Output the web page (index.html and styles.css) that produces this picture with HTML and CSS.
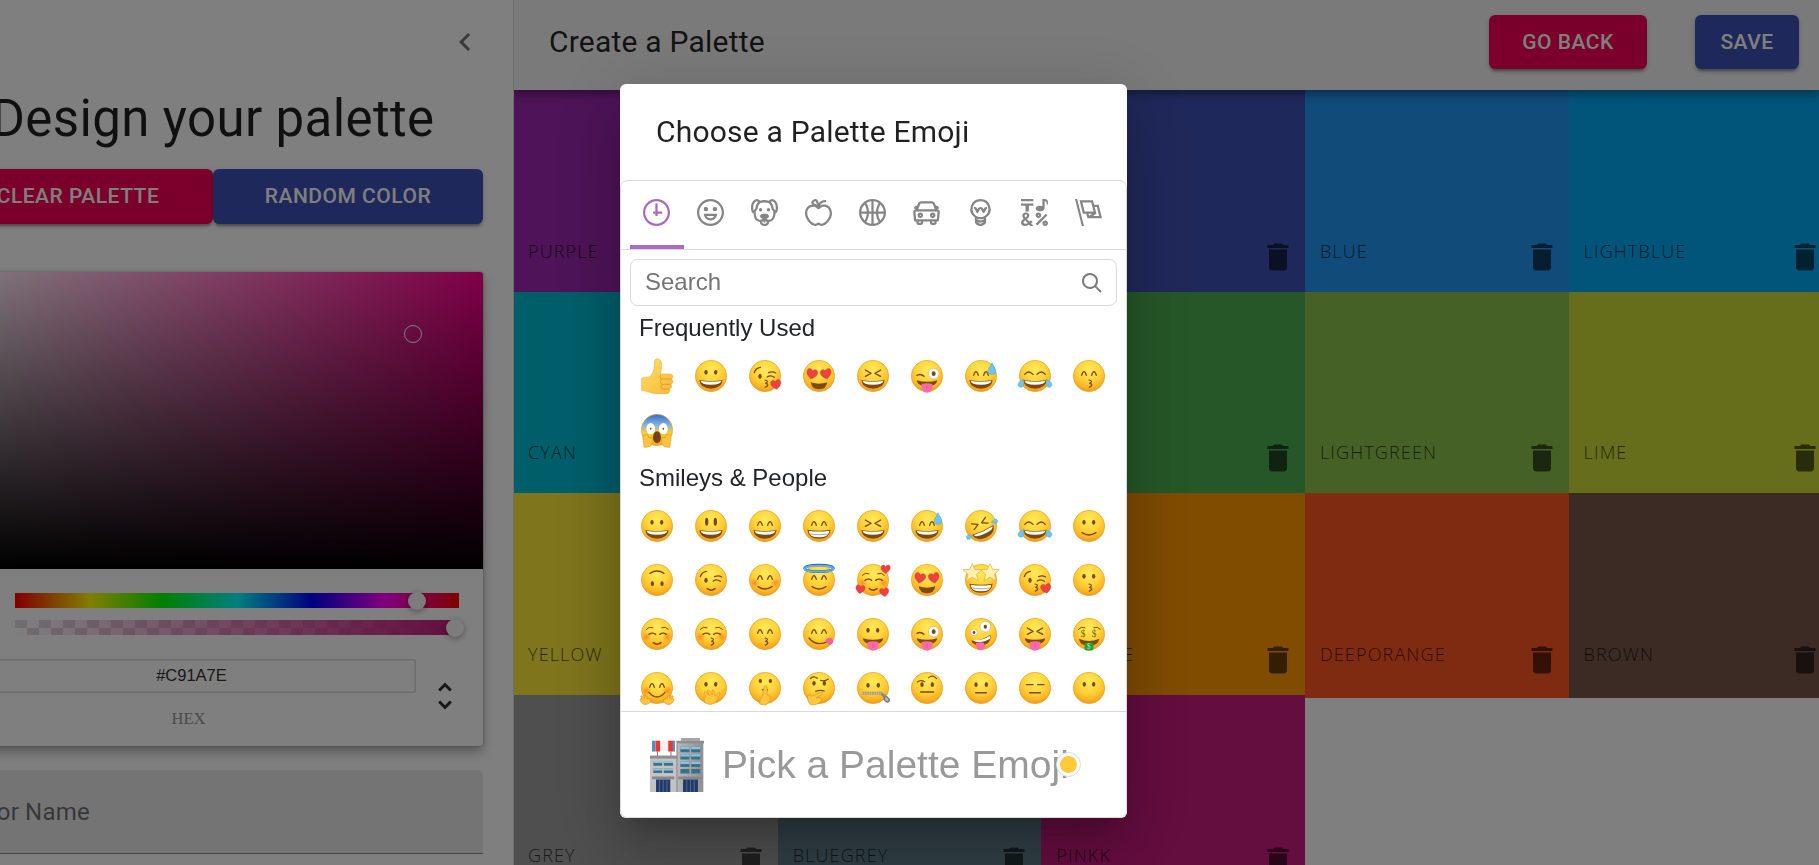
FILE: index.html
```html
<!DOCTYPE html>
<html lang="en">
<head>
<meta charset="utf-8">
<title>Create a Palette</title>
<link rel="stylesheet" href="styles.css">
</head>
<body>
<div class="app">
  <aside class="drawer">
    <div class="drawer-inner">
      <div class="drawer-head"><svg class="chevron" viewBox="0 0 24 24"><path d="M15.41 7.41L14 6l-6 6 6 6 1.41-1.41L10.83 12z"/></svg></div>
      <div class="drawer-body">
        <h1 class="heading">Design your palette</h1>
        <div class="btn-row"><button class="btn red">CLEAR PALETTE</button><button class="btn blue">RANDOM COLOR</button></div>
        <div class="picker">
          <div class="saturation"><span class="sat-pointer"></span></div>
          <div class="controls">
            <div class="sliders">
              <div class="hue"><span class="thumb hue-thumb"></span></div>
              <div class="alpha"><span class="thumb alpha-thumb"></span></div>
            </div>
            <div class="fields">
              <div class="hexfield"><div class="hexinput">#C91A7E</div><div class="hexlabel">HEX</div></div>
              <svg class="unfold" viewBox="0 0 24 24"><path d="M12,18.17L8.83,15L7.42,16.41L12,21L16.59,16.41L15.17,15M12,5.83L15.17,9L16.58,7.59L12,3L7.41,7.59L8.83,9L12,5.83Z"/></svg>
            </div>
          </div>
        </div>
        <div class="textfield">Color Name</div>
      </div>
    </div>
  </aside>
  <main class="main">
    <header class="appbar">
      <div class="appbar-title">Create a Palette</div>
      <button class="btn red go">GO BACK</button><button class="btn blue save">SAVE</button>
    </header>
    <div class="colors" id="colors"></div>
  </main>
</div>
<div class="backdrop">
  <section class="dialog">
    <h2 class="dialog-title">Choose a Palette Emoji</h2>
    <div class="mart">
      <nav class="anchors" id="anchors"></nav>
      <div class="search"><span>Search</span><svg viewBox="0 0 20 20"><path d="M12.9 14.32a8 8 0 1 1 1.41-1.41l5.35 5.33-1.42 1.42-5.33-5.34zM8 14A6 6 0 1 0 8 2a6 6 0 0 0 0 12z"/></svg></div>
      <div class="scroll">
        <h3 class="category">Frequently Used</h3>
        <div class="emojis" id="frequent"></div>
        <h3 class="category">Smileys &amp; People</h3>
        <div class="emojis" id="people"></div>
      </div>
      <footer class="preview">
        <svg class="building" viewBox="0 0 160 160">
          <defs><linearGradient id="wall" x2="1"><stop offset="0" stop-color="#b9b9bd"/><stop offset="1" stop-color="#8f8f94"/></linearGradient></defs>
          <path d="M22 38v16M62 38v16" stroke="#777" stroke-width="3"/>
          <path d="M6 8h66v32H6z" fill="#f2f2f4"/><path d="M6 8h9v32H6z" fill="#4a8fd0"/><path d="M16 8h14v32H16zM54 8h14v32H54z" fill="#e8392d"/><path d="M68 8h6v32h-6z" fill="#4a8fd0"/>
          <path d="M0 58h80v102H0z" fill="#c3c2c4"/><path d="M0 52h82v9H0z" fill="#8f8f91"/>
          <path d="M80 14h78v146H80z" fill="url(#wall)"/><path d="M78 8h82v8H78z" fill="#8e8e90"/><path d="M92 0h56v9H92z" fill="#a5a6a8"/>
          <path d="M10 68h26v14H10zM41 68h27v14H41zM10 90h26v14H10zM41 90h27v14H41zM90 26h27v16H90zM122 26h27v16h-27zM90 48h27v16H90zM122 48h27v16h-27zM90 70h27v16H90zM122 70h27v16h-27zM90 92h27v13H90zM122 92h27v13h-27z" fill="#3d7088"/>
          <path d="M10 68h26v6H10zM41 68h27v6H41zM10 90h26v6H10zM41 90h27v6H41zM90 26h27v7H90zM122 26h27v7h-27zM90 48h27v7H90zM122 48h27v7h-27zM90 70h27v7H90zM122 70h27v7h-27z" fill="#8fc4d8"/>
          <path d="M6 114h66v8H6zM84 114h72v8H84z" fill="#85878c"/><path d="M18 123h42v37H18zM98 123h44v37H98z" fill="#213a66"/><path d="M39 123v37M120 123v37M28 123v37M50 123v37M109 123v37M131 123v37" stroke="#6183ac" stroke-width="2"/><path d="M80 16v144" stroke="#858589" stroke-width="3"/>
        </svg>
        <span class="preview-text">Pick a Palette Emoji</span>
        <span class="skin"><i></i></span>
      </footer>
    </div>
  </section>
</div>
<script src="script.js"></script>
</body>
</html>
```

FILE: styles.css
```css
* { box-sizing: border-box; }
body { margin: 0; width: 1819px; height: 865px; overflow: hidden; background: #fff; font-family: Roboto, sans-serif; color: rgba(0,0,0,.87); }
h1, h2, h3 { margin: 0; font-weight: 400; }
.app { display: flex; height: 865px; }

.drawer { width: 514px; flex: none; overflow: hidden; border-right: 1px solid #e0e0e0; display: flex; justify-content: flex-end; }
.drawer-inner { width: 599px; flex: none; }
.drawer-head { height: 84px; display: flex; align-items: center; justify-content: flex-end; padding-right: 30px; }
.chevron { width: 36px; height: 36px; fill: #757575; }
.drawer-body { width: 540px; margin-left: 29px; }
.heading { height: 85px; padding-top: 5px; font-size: 51px; line-height: 60px; letter-spacing: .375px; text-align: center; white-space: nowrap; }
.btn-row { display: flex; }
.btn { border: 0; border-radius: 6px; height: 54.75px; color: #fff; font: 500 21px Roboto, sans-serif; letter-spacing: .5px; box-shadow: 0 4.5px 1.5px -3px rgba(0,0,0,.2), 0 3px 3px rgba(0,0,0,.14), 0 1.5px 7.5px rgba(0,0,0,.12); }
.btn-row .btn { width: 50%; }
.red { background: #f50057; }
.blue { background: #3f51b5; }

.picker { margin-top: 48px; height: 474px; border-radius: 3px; background: #fff; box-shadow: 0 0 3px rgba(0,0,0,.3), 0 6px 12px rgba(0,0,0,.3); }
.saturation { position: relative; height: 297px; border-radius: 3px 3px 0 0; background: linear-gradient(to top, #000, transparent), linear-gradient(to right, #fff, transparent), #ff0090; }
.sat-pointer { position: absolute; left: 461px; top: 53px; width: 18px; height: 18px; border: 1.5px solid #fff; border-radius: 50%; }
.controls { padding: 24px 24px 0; }
.sliders { padding-left: 48px; display: grid; gap: 12px; }
.hue, .alpha { position: relative; height: 15px; }
.hue { background: linear-gradient(to right, #f00 0%, #ff0 17%, #0f0 33%, #0ff 50%, #00f 67%, #f0f 83%, #f00 100%); }
.alpha { background: linear-gradient(to right, rgba(201,26,126,0), #c91a7e), repeating-conic-gradient(#fff 0 25%, #dedede 0 50%) 0 0 / 24px 16px; }
.thumb { position: absolute; top: -1px; width: 18px; height: 18px; border-radius: 50%; background: #f8f8f8; box-shadow: 0 1.5px 6px rgba(0,0,0,.37); }
.hue-thumb { left: 393px; }
.alpha-thumb { left: 431px; }
.fields { display: flex; padding-top: 24px; }
.hexfield { width: 449px; flex: none; }
.hexinput { height: 34px; border-radius: 3px; box-shadow: inset 0 0 0 1.5px #dadada; color: #333; font: 16.5px/32px "Liberation Sans", sans-serif; text-align: center; }
.hexlabel { padding-top: 16px; padding-right: 6px; text-align: center; color: #969696; font: 16.5px/20px "Liberation Serif", serif; }
.unfold { width: 36px; height: 36px; flex: none; margin: 19px 0 0 11px; fill: #333; }
.textfield { margin-top: 24px; height: 84px; padding: 28px 18px 0; border-radius: 6px 6px 0 0; border-bottom: 1.5px solid #8a8a8a; background: #e8e8e8; font-size: 24px; line-height: 28px; letter-spacing: .2px; color: rgba(0,0,0,.54); }

.main { flex: 1; overflow: hidden; }
.appbar { position: relative; z-index: 1; height: 90px; display: flex; align-items: center; padding: 0 20px 6px 35px; background: #f5f5f5; box-shadow: 0 3px 6px -1.5px rgba(0,0,0,.2), 0 6px 7.5px rgba(0,0,0,.14), 0 1.5px 15px rgba(0,0,0,.12); }
.appbar-title { flex: 1; padding-bottom: 2px; font-size: 30px; letter-spacing: .22px; }
.go { width: 158px; margin-right: 48px; }
.save { width: 104px; }
.colors { display: grid; grid-template-columns: repeat(5, 263.65px); grid-auto-rows: 201.5px; width: 1320px; }
.swatch { display: flex; align-items: flex-end; justify-content: space-between; padding: 0 9px 17px 15px; }
.swatch:nth-child(5n+1) { padding-left: 14px; }
.swatch.tall { margin-bottom: -3px; padding-bottom: 20px; }
.swatch span { font: 300 18px/24px "Open Sans", sans-serif; letter-spacing: 1.15px; color: rgba(0,0,0,.7); padding-bottom: 12px; }
.swatch svg { width: 36px; height: 36px; fill: rgba(0,0,0,.6); margin-left: auto; }

.backdrop { position: fixed; z-index: 10; inset: 0; padding: 84px 0 0 620px; background: rgba(0,0,0,.5); }
.dialog { width: 507px; height: 734px; border-radius: 6px; overflow: hidden; background: #fff; box-shadow: 0 16px 22px -10px rgba(0,0,0,.2), 0 36px 57px 4px rgba(0,0,0,.14), 0 13px 69px 12px rgba(0,0,0,.12); }
.dialog-title { height: 96px; padding: 24px 36px; font-size: 30px; line-height: 48px; letter-spacing: .2px; white-space: nowrap; }
.mart { height: 638px; border: 1px solid #d9d9d9; border-radius: 7.5px; display: flex; flex-direction: column; font-family: "Liberation Sans", sans-serif; color: #222427; }
.anchors { height: 69px; flex: none; display: flex; padding: 0 9px; border-bottom: 1px solid #d9d9d9; }
.anchors span { width: 54px; flex: none; padding: 18px 0 0 13px; border-bottom: 4px solid transparent; }
.anchors svg { display: block; width: 27px; height: 27px; fill: #858585; }
.anchors .active { border-color: #a96bc2; }
.anchors .active svg { fill: #a96bc2; }
.search { height: 47px; flex: none; margin: 9px 9px 0; padding: 0 14px; display: flex; align-items: center; justify-content: space-between; border: 1px solid #d9d9d9; border-radius: 7.5px; font-size: 24px; color: #757575; }
.search span { padding-bottom: 2px; }
.search svg { width: 20px; height: 20px; fill: #7b7b7b; }
.scroll { height: 406px; flex: none; padding: 1px 9px 0; overflow: hidden; border-bottom: 1px solid #d9d9d9; }
.category { height: 42px; padding: 6px 9px 0; font-size: 24px; line-height: 30px; }
.emojis { display: grid; grid-template-columns: repeat(9, 54px); grid-auto-rows: 54px; }
.emojis svg { width: 32px; height: 32px; margin: 11px; overflow: visible; }
.preview { height: 105px; display: flex; align-items: center; padding: 0 0 0 29px; }
.building { width: 54px; height: 54px; flex: none; }
.preview-text { margin-left: 18px; font-size: 39px; color: #999; white-space: nowrap; }
.skin { width: 25px; height: 25px; flex: none; margin-left: -13px; padding: 3px; border: 1px solid #d9d9d9; border-radius: 50%; background: #fff; position: relative; }
.skin i { display: block; width: 17px; height: 17px; border-radius: 50%; background: #ffc93a; }
```

FILE: script.js
```js
const colors = [
  ['PURPLE', '#9c27b0'], ['', '#673ab7'], ['', '#3f51b5'], ['BLUE', '#2196f3'], ['LIGHTBLUE', '#03a9f4'],
  ['CYAN', '#00bcd4'], ['', '#009688'], ['', '#4caf50'], ['LIGHTGREEN', '#8bc34a'], ['LIME', '#cddc39'],
  ['YELLOW', '#ffeb3b'], ['', '#ffc107'], ['ORANGE', '#ff9800'], ['DEEPORANGE', '#ff5722', 'tall'], ['BROWN', '#795548', 'tall'],
  ['GREY', '#9e9e9e'], ['BLUEGREY', '#607d8b'], ['PINKK', '#c91a7e']
];
const trash = '<svg viewBox="0 0 24 24"><path d="M6 19c0 1.1.9 2 2 2h8c1.1 0 2-.9 2-2V7H6v12zM19 4h-3.5l-1-1h-5l-1 1H5v2h14V4z"/></svg>';
document.getElementById('colors').innerHTML = colors.map(([n, c, k]) =>
  `<div class="swatch ${k || ''}" style="background:${c}"><span>${n}</span>${trash}</div>`).join('');

const ring = 'M12 0C5.373 0 0 5.373 0 12s5.373 12 12 12 12-5.373 12-12S18.627 0 12 0m0 22C6.486 22 2 17.514 2 12S6.486 2 12 2s10 4.486 10 10-4.486 10-10 10';
const categories = [
  'M13 4h-2l-.001 7H9v2h2v2h2v-2h4v-2h-4z' + ring,
  ring + 'M8 7a2 2 0 1 0-.001 3.999A2 2 0 0 0 8 7M16 7a2 2 0 1 0-.001 3.999A2 2 0 0 0 16 7M15.232 15c-.693 1.195-1.87 2-3.349 2-1.477 0-2.655-.805-3.347-2H15m3-2H6a6 6 0 1 0 12 0',
  'M15.5 8a1.5 1.5 0 1 0 .001 3.001A1.5 1.5 0 0 0 15.5 8M8.5 8a1.5 1.5 0 1 0 .001 3.001A1.5 1.5 0 0 0 8.5 8M18.933 0h-.027c-.97 0-2.138.787-3.018 1.497-1.274-.374-2.612-.51-3.887-.51-1.285 0-2.616.133-3.874.517C7.245.79 6.069 0 5.093 0h-.027C3.352 0 .07 2.67.002 7.026c-.039 2.479.276 4.238 1.04 5.013.254.258.882.677 1.295.882.191 3.177.922 5.238 2.536 6.38.897.637 2.187.949 3.2 1.102C8.04 20.6 8 20.795 8 21c0 1.773 2.35 3 4 3 1.648 0 4-1.227 4-3 0-.201-.038-.393-.072-.586 2.573-.385 5.435-1.877 5.925-7.587.396-.22.887-.568 1.104-.788.763-.774 1.079-2.534 1.04-5.013C23.929 2.67 20.646 0 18.933 0M3.223 9.135c-.237.281-.837 1.155-.884 1.238-.15-.41-.368-1.349-.337-3.291.051-3.281 2.478-4.972 3.091-5.031.256.015.731.27 1.265.646-1.11 1.171-2.275 2.915-2.352 5.125-.133.546-.398.858-.783 1.313M12 22c-.901 0-1.954-.693-2-1 0-.654.475-1.236 1-1.602V20a1 1 0 1 0 2 0v-.602c.524.365 1 .947 1 1.602-.046.307-1.099 1-2 1m3-3.48v.02a4.752 4.752 0 0 0-1.262-1.02c1.092-.516 2.239-1.334 2.239-2.217 0-1.842-1.781-2.195-3.977-2.195-2.196 0-3.978.354-3.978 2.195 0 .883 1.148 1.701 2.238 2.217A4.8 4.8 0 0 0 9 18.539v-.025c-1-.076-2.182-.281-2.973-.842-1.301-.92-1.838-3.045-1.853-6.478l.023-.041c.496-.826 1.49-1.45 1.804-3.102 0-2.047 1.357-3.631 2.362-4.522C9.37 3.178 10.555 3 11.948 3c1.447 0 2.685.192 3.733.57 1 .9 2.316 2.465 2.316 4.48.313 1.651 1.307 2.275 1.803 3.102.035.058.068.117.102.178-.059 5.967-1.949 7.01-4.902 7.19m6.628-8.202c-.037-.065-.074-.13-.113-.195a7.587 7.587 0 0 0-.739-.987c-.385-.455-.648-.768-.782-1.313-.076-2.209-1.241-3.954-2.353-5.124.531-.376 1.004-.63 1.261-.647.636.071 3.044 1.764 3.096 5.031.027 1.81-.347 3.218-.37 3.235',
  'M17 4.978c-1.838 0-2.876.396-3.68.934.513-1.172 1.768-2.934 4.68-2.934a1 1 0 0 0 0-2c-2.921 0-4.629 1.365-5.547 2.512-.064.078-.119.162-.18.244C11.73 1.838 10.798.023 9.207.023 8.579.022 7.85.306 7 .978 5.027 2.54 5.329 3.902 6.492 4.999 3.609 5.222 0 7.352 0 12.969c0 4.582 4.961 11.009 9 11.009 1.975 0 2.371-.486 3-1 .629.514 1.025 1 3 1 4.039 0 9-6.418 9-11 0-5.953-4.055-8-7-8M8.242 2.546c.641-.508.943-.523.965-.523.426.169.975 1.405 1.357 3.055-1.527-.629-2.741-1.352-2.98-1.846.059-.112.241-.356.658-.686M15 21.978c-1.08 0-1.21-.109-1.559-.402l-.176-.146c-.367-.302-.816-.452-1.266-.452s-.898.15-1.266.452l-.176.146c-.347.292-.477.402-1.557.402-2.813 0-7-5.389-7-9.009 0-5.823 4.488-5.991 5-5.991 1.939 0 2.484.471 3.387 1.251l.323.276a1.995 1.995 0 0 0 2.58 0l.323-.276c.902-.78 1.447-1.251 3.387-1.251.512 0 5 .168 5 6 0 3.617-4.187 9-7 9',
  'M12 0C5.373 0 0 5.372 0 12c0 6.627 5.373 12 12 12 6.628 0 12-5.373 12-12 0-6.628-5.372-12-12-12m9.949 11H17.05c.224-2.527 1.232-4.773 1.968-6.113A9.966 9.966 0 0 1 21.949 11M13 11V2.051a9.945 9.945 0 0 1 4.432 1.564c-.858 1.491-2.156 4.22-2.392 7.385H13zm-2 0H8.961c-.238-3.165-1.536-5.894-2.393-7.385A9.95 9.95 0 0 1 11 2.051V11zm0 2v8.949a9.937 9.937 0 0 1-4.432-1.564c.857-1.492 2.155-4.221 2.393-7.385H11zm4.04 0c.236 3.164 1.534 5.893 2.392 7.385A9.92 9.92 0 0 1 13 21.949V13h2.04zM4.982 4.887C5.718 6.227 6.726 8.473 6.951 11h-4.9a9.977 9.977 0 0 1 2.931-6.113M2.051 13h4.9c-.226 2.527-1.233 4.771-1.969 6.113A9.972 9.972 0 0 1 2.051 13m16.967 6.113c-.735-1.342-1.744-3.586-1.968-6.113h4.899a9.961 9.961 0 0 1-2.931 6.113',
  'M6.5 12C5.122 12 4 13.121 4 14.5S5.122 17 6.5 17 9 15.879 9 14.5 7.878 12 6.5 12m0 3c-.275 0-.5-.225-.5-.5s.225-.5.5-.5.5.225.5.5-.225.5-.5.5M17.5 12c-1.378 0-2.5 1.121-2.5 2.5s1.122 2.5 2.5 2.5 2.5-1.121 2.5-2.5-1.122-2.5-2.5-2.5m0 3c-.275 0-.5-.225-.5-.5s.225-.5.5-.5.5.225.5.5-.225.5-.5.5M22.482 9.494l-1.039-.346L21.4 9h.6c.552 0 1-.439 1-.992 0-.006-.003-.008-.003-.008H23c0-1-.889-2-1.984-2h-.642l-.731-1.717C19.262 3.012 18.091 2 16.764 2H7.236C5.909 2 4.738 3.012 4.357 4.283L3.626 6h-.642C1.889 6 1 7 1 8h.003S1 8.002 1 8.008C1 8.561 1.448 9 2 9h.6l-.043.148-1.039.346a2.001 2.001 0 0 0-1.359 2.097l.751 7.508a1 1 0 0 0 .994.901H3v1c0 1.103.896 2 2 2h2c1.104 0 2-.897 2-2v-1h6v1c0 1.103.896 2 2 2h2c1.104 0 2-.897 2-2v-1h1.096a.999.999 0 0 0 .994-.901l.751-7.508a2.001 2.001 0 0 0-1.359-2.097M6.273 4.857C6.402 4.43 6.788 4 7.236 4h9.527c.448 0 .834.43.963.857L19.313 9H4.688l1.585-4.143zM7 21H5v-1h2v1zm12 0h-2v-1h2v1zm2.189-3H2.811l-.662-6.607L3 11h18l.852.393L21.189 18z',
  'M12 0a9 9 0 0 0-5 16.482V21s2.035 3 5 3 5-3 5-3v-4.518A9 9 0 0 0 12 0zm0 2c3.86 0 7 3.141 7 7s-3.14 7-7 7-7-3.141-7-7 3.14-7 7-7zM9 17.477c.94.332 1.946.523 3 .523s2.06-.19 3-.523v.834c-.91.436-1.925.689-3 .689a6.924 6.924 0 0 1-3-.69v-.833zm.236 3.07A8.854 8.854 0 0 0 12 21c.965 0 1.888-.167 2.758-.451C14.155 21.173 13.153 22 12 22c-1.102 0-2.117-.789-2.764-1.453zM14.745 12.449h-.004c-.852-.024-1.188-.858-1.577-1.824-.421-1.061-.703-1.561-1.182-1.566h-.009c-.481 0-.783.497-1.235 1.537-.436.982-.801 1.811-1.636 1.791l-.276-.043c-.565-.171-.853-.691-1.284-1.794-.125-.313-.202-.632-.27-.913-.051-.213-.127-.53-.195-.634C7.067 9.004 7.039 9 6.99 9A1 1 0 0 1 7 7h.01c1.662.017 2.015 1.373 2.198 2.134.486-.981 1.304-2.058 2.797-2.075 1.531.018 2.28 1.153 2.731 2.141l.002-.008C14.944 8.424 15.327 7 16.979 7h.032A1 1 0 1 1 17 9h-.011c-.149.076-.256.474-.319.709a6.484 6.484 0 0 1-.311.951c-.429.973-.79 1.789-1.614 1.789',
  'M0 0h11v2H0zM4 11h3V6h4V4H0v2h4zM15.5 17c1.381 0 2.5-1.116 2.5-2.493s-1.119-2.493-2.5-2.493S13 13.13 13 14.507 14.119 17 15.5 17m0-2.986c.276 0 .5.222.5.493 0 .272-.224.493-.5.493s-.5-.221-.5-.493.224-.493.5-.493M21.5 19.014c-1.381 0-2.5 1.116-2.5 2.493S20.119 24 21.5 24s2.5-1.116 2.5-2.493-1.119-2.493-2.5-2.493m0 2.986a.497.497 0 0 1-.5-.493c0-.271.224-.493.5-.493s.5.222.5.493a.497.497 0 0 1-.5.493M22 13l-9 9 1.513 1.5 8.99-9.009zM17 11c2.209 0 4-1.119 4-2.5V2s.985-.161 1.498.949C23.01 4.055 23 6 23 6s1-1.119 1-3.135C24-.02 21 0 21 0h-2v6.347A5.853 5.853 0 0 0 17 6c-2.209 0-4 1.119-4 2.5s1.791 2.5 4 2.5M10.297 20.482l-1.475-1.585a47.54 47.54 0 0 1-1.442 1.129c-.307-.288-.989-1.016-2.045-2.183.902-.836 1.479-1.466 1.729-1.892s.376-.871.376-1.336c0-.592-.273-1.178-.818-1.759-.546-.581-1.329-.871-2.349-.871-1.008 0-1.79.293-2.344.879-.556.587-.832 1.181-.832 1.784 0 .813.419 1.748 1.256 2.805-.847.614-1.444 1.208-1.794 1.784a3.465 3.465 0 0 0-.523 1.833c0 .857.308 1.56.924 2.107.616.549 1.423.823 2.42.823 1.173 0 2.444-.379 3.813-1.137L8.235 24h2.819l-2.09-2.383 1.333-1.135zm-6.736-6.389a1.02 1.02 0 0 1 .73-.286c.31 0 .559.085.747.254a.849.849 0 0 1 .283.659c0 .518-.419 1.112-1.257 1.784-.536-.651-.805-1.231-.805-1.742a.901.901 0 0 1 .302-.669M3.74 22c-.427 0-.778-.116-1.057-.349-.279-.232-.418-.487-.418-.766 0-.594.509-1.288 1.527-2.083.968 1.134 1.717 1.946 2.248 2.438-.921.507-1.686.76-2.3.76',
  'M0 0l6.084 24H8L1.916 0zM21 5h-4l-1-4H4l3 12h3l1 4h13L21 5zM6.563 3h7.875l2 8H8.563l-2-8zm8.832 10l-2.856 1.904L12.063 13h3.332zM19 13l-1.5-6h1.938l2 8H16l3-2z'
];
document.getElementById('anchors').innerHTML = categories.map((d, i) =>
  `<span class="${i ? '' : 'active'}"><svg viewBox="0 0 24 24"><path d="${d}"/></svg></span>`).join('');

// Emoji parts, drawn on a 96-unit square with the face filling it.
const B = '#7a4a12';
const line = (d, w = 4) => `<path d="${d}" fill="none" stroke="${B}" stroke-width="${w}" stroke-linecap="round" stroke-linejoin="round"/>`;
const fill = (d, c) => `<path d="${d}" fill="${c}"/>`;
const dot = (x, y, rx = 5, ry = 7) => `<ellipse cx="${x}" cy="${y}" rx="${rx}" ry="${ry}" fill="${B}"/>`;
const heart = (x, y, s = 1, r = 0) => `<path transform="translate(${x} ${y}) rotate(${r}) scale(${s})" d="M0 16C-8 11-18 3-16-7-14-16-4-16 0-8 4-16 14-16 16-7 18 3 8 11 0 16z" fill="#ec4242" stroke="#c92b35" stroke-width="1"/>`;
const drop = (x, y, r = 0, s = 1) => `<path transform="translate(${x} ${y}) rotate(${r}) scale(${s})" d="M0-18C3-8 11-2 11 7 11 21-11 21-11 7-11-2-3-8 0-18z" fill="#6cc6f0" stroke="#3a9fd6" stroke-width="1.5"/>`;
const eyes = {
  dots: dot(33, 37) + dot(62, 37),
  tall: dot(35, 35, 5, 12) + dot(61, 35, 5, 12),
  happy: line('M26 46Q33 24 40 46M56 46Q63 24 70 46'),
  squeeze: line('M25 30L42 40L25 49M71 30L54 40L71 49', 4),
  closed: line('M24 49Q34 42 44 49M56 49Q66 42 76 49'),
  wink: dot(33, 49, 5, 8) + line('M55 51Q65 44 76 52M16 38Q20 24 34 22M59 38Q70 33 80 39'),
  hearts: heart(27, 41, 1, 12) + heart(69, 41, 1, -12),
  zany: line('M18 46Q29 40 39 49') + '<circle cx="68" cy="41" r="16" fill="#fff" stroke="#c7b09a" stroke-width="2"/>' + dot(68, 41, 6, 7)
};
const brow = line('M16 34Q24 24 36 29M62 29Q74 24 82 34', 3);
const mouths = {
  grin: fill('M13 61Q48 66 83 61Q79 86 48 86Q17 86 13 61', B) + fill('M17 63Q48 68 79 63Q78 74 48 74Q18 74 17 63', '#fff'),
  teeth: fill('M13 59Q48 65 83 59Q79 86 48 86Q17 86 13 59', B) + fill('M17 62Q48 67 79 62Q78 82 48 82Q18 82 17 62', '#fff') + line('M18 72Q48 77 78 72', 1.5),
  smile: line('M27 68Q48 82 69 68'),
  small: line('M37 74Q48 83 60 74', 4.5),
  kiss: line('M48 60Q62 63 50 70Q64 73 49 82', 3.5),
  tongue: fill('M17 61Q48 70 79 61Q76 79 48 79Q20 79 17 61', B) + fill('M32 72Q48 68 64 72V84Q62 98 48 98T32 84z', '#fb69a8') + '<path d="M48 77v12" stroke="#d4438a" stroke-width="2"/>',
  flat: line('M32 62H64', 4.5)
};
const blush = '<circle cx="17" cy="56" r="14" fill="url(#cheek)"/><circle cx="79" cy="56" r="14" fill="url(#cheek)"/>';
const handShape = (d) => `<path d="${d}" fill="#fcc63f" stroke="#dc941c" stroke-width="2" stroke-linejoin="round"/>`;
const face = (s, f = 'face') => `<circle cx="48" cy="48" r="47" fill="url(#${f})" stroke="#e9a02a" stroke-width="2"/>` + s;
const E = {
  thumb: `<path d="M30 47C38 36 41 24 40 6 41-6 56-7 61 6 64 20 59 32 59 42H87C98 43 98 55 91 57 98 61 97 71 89 73 95 78 92 86 85 87 89 93 84 101 77 101H45C28 100 20 92 2 92V54C8 50 22 54 30 47z" fill="url(#thumbfill)" stroke="#e2a733" stroke-width="1.5"/><path d="M62 57H91M62 73H89M62 87H85M60 44Q52 50 61 58Q54 66 62 73Q56 80 64 88" fill="none" stroke="#dc981f" stroke-width="2.5"/>`,
  grin: face(eyes.dots + mouths.grin),
  smiley: face(eyes.tall + mouths.grin),
  smile: face(eyes.happy + mouths.grin),
  beam: face(eyes.happy + mouths.teeth),
  laugh: face(eyes.squeeze + mouths.grin),
  sweat: face(eyes.happy + mouths.grin + drop(81, 26)),
  rofl: face(`<g transform="rotate(-25 48 48)">${eyes.squeeze + mouths.grin}</g>` + drop(88, 35, -110, .6) + drop(14, 80, 60, .6)),
  joy: face(line('M17 43Q29 29 42 43M54 43Q67 29 79 43') + mouths.grin + drop(8, 69, 30, .75) + drop(88, 69, -30, .75)),
  slight: face(eyes.dots + mouths.smile),
  upside: face(`<g transform="rotate(180 48 48)">${eyes.dots + mouths.smile}</g>`),
  wink: face(eyes.wink + mouths.small),
  blush: face(blush + eyes.happy + mouths.smile),
  angel: face(eyes.happy + mouths.smile) + '<ellipse cx="48" cy="13" rx="43" ry="10" fill="none" stroke="#2862b5" stroke-width="8"/><ellipse cx="48" cy="14" rx="43" ry="9" fill="none" stroke="#63afe9" stroke-width="5"/>',
  love: face(blush + brow + eyes.closed + mouths.small + heart(86, 15, .85) + heart(10, 75, .85, 8) + heart(82, 84, .85, -8)),
  hearts: face(eyes.hearts + fill('M23 67Q48 75 73 67Q70 88 48 88Q26 88 23 67', B)),
  star: face(mouths.teeth) + [22, 75].map(x => `<path transform="translate(${x} 26)" d="M0-27L8-10 28-9 13 5 18 24 0 14-18 24-13 5-28-9-8-10z" fill="#fff0b3" stroke="#e4a63a" stroke-width="2"/>`).join(''),
  kissheart: face(eyes.wink + mouths.kiss + heart(81, 73, .95, -10)),
  kiss: face(eyes.dots + mouths.kiss),
  relaxed: face(blush + brow + eyes.closed + mouths.small),
  kissclosed: face(blush + brow + eyes.closed + mouths.kiss),
  kisshappy: face(eyes.happy + mouths.kiss),
  yum: face(eyes.happy + line('M18 60Q40 88 76 70') + fill('M66 68Q78 54 88 63Q96 75 82 80Q75 80 66 68', '#f65f9c')),
  tongue: face(eyes.dots + mouths.tongue),
  winktongue: face(eyes.zany + mouths.tongue),
  zany: face('<circle cx="27" cy="43" r="10" fill="#fff" stroke="#ae997d" stroke-width="1.5"/><circle cx="61" cy="26" r="16" fill="#fff" stroke="#ae997d" stroke-width="1.5"/>' + dot(27, 43, 4, 5) + dot(61, 26, 5, 6) + fill('M19 67Q48 70 76 50Q80 78 48 83Q24 84 19 67', B) + fill('M21 66Q48 70 75 53L75 62Q46 81 21 66', '#fff') + fill('M32 76Q43 70 57 74L60 86Q56 97 44 97Q33 96 32 76', '#fb69a8')),
  squeezetongue: face(eyes.squeeze + mouths.tongue),
  money: face(brow + '<text x="23" y="56" font-family="Liberation Serif" font-size="29" fill="#69700d">$</text><text x="56" y="56" font-family="Liberation Serif" font-size="29" fill="#69700d">$</text>' + fill('M18 62Q48 76 79 62Q76 83 48 83Q20 83 18 62', B) + '<path d="M35 74H61V96Q48 101 35 96z" fill="#259b3a"/><text x="42" y="93" font-family="Liberation Serif" font-size="22" fill="#b9ed9b">$</text>'),
  hug: face(blush + eyes.happy + line('M24 61Q48 89 72 61')) + handShape('M20 96C5 101-1 90-3 82Q0 76 5 82L-1 72Q4 67 10 79L9 70Q15 67 18 80Q31 79 28 90z') + handShape('M76 96C91 101 97 90 99 82Q96 76 91 82L97 72Q92 67 86 79L87 70Q81 67 78 80Q65 79 68 90z'),
  cover: face(eyes.dots + handShape('M28 91Q25 78 32 74Q24 59 31 59L44 71L36 56Q42 51 52 69L51 54Q59 52 61 73L73 61Q79 64 66 83Q58 98 42 97z')),
  shush: face(dot(34, 27, 5, 6) + dot(64, 27, 5, 6) + line('M40 54Q48 49 56 54', 3.5) + handShape('M32 96Q31 78 41 72L45 44Q50 37 54 44V68Q67 69 64 83Q59 97 48 99z')),
  think: face(dot(33, 34) + dot(64, 34) + line('M22 20Q31 10 43 19M53 25Q64 29 76 21M38 58Q52 53 64 57', 3.5) + handShape('M14 71Q20 66 26 72L58 59Q64 63 52 71L40 77Q61 76 56 84Q48 100 24 98Q13 92 14 71')),
  zip: face(dot(33, 40) + dot(64, 40) + '<path d="M17 64H76" stroke="#8a8a8a" stroke-width="9" stroke-dasharray="5 2"/><path d="M17 64H76" stroke="#bbb" stroke-width="3"/><path d="M73 65L91 79" stroke="#8a8a8a" stroke-width="9"/><ellipse cx="89" cy="82" rx="9" ry="6" transform="rotate(45 89 82)" fill="#bbb" stroke="#777" stroke-width="4"/>'),
  raised: face(dot(33, 38) + dot(64, 38) + line('M19 30Q29 22 41 29M53 17Q65 7 77 20', 3.5) + line('M29 60H68')),
  neutral: face(dot(33, 38) + dot(64, 38) + mouths.flat),
  blank: face(line('M22 38H42M56 38H75') + mouths.flat),
  mute: face(dot(34, 37) + dot(62, 37)),
  scream: face('<ellipse cx="29" cy="44" rx="13" ry="17" fill="#fff"/><ellipse cx="67" cy="44" rx="13" ry="17" fill="#fff"/>' + dot(29, 44, 2.5, 3) + dot(67, 44, 2.5, 3) + '<ellipse cx="48" cy="70" rx="12" ry="18" fill="#774212"/>', 'fear') + handShape('M10 100Q8 91 8 85Q2 66 12 62Q22 61 24 72L33 70Q38 86 27 98z') + handShape('M86 100Q88 91 88 85Q94 66 84 62Q74 61 72 72L63 70Q58 86 69 98z')
};
const svg = n => `<svg viewBox="0 0 96 96">${E[n]}</svg>`;
const defs = '<defs><radialGradient id="face" cx=".5" cy=".3" r=".7"><stop offset="0" stop-color="#ffe95c"/><stop offset=".5" stop-color="#ffd43a"/><stop offset=".8" stop-color="#fbb626"/><stop offset="1" stop-color="#ee981f"/></radialGradient><radialGradient id="cheek"><stop offset="0" stop-color="#f9661c" stop-opacity=".6"/><stop offset="1" stop-color="#f9661c" stop-opacity="0"/></radialGradient><linearGradient id="fear" y2="1" x2="0"><stop offset="0" stop-color="#2d70cd"/><stop offset=".35" stop-color="#8bb4dd"/><stop offset=".58" stop-color="#f7cd38"/><stop offset="1" stop-color="#f5a81d"/></linearGradient><linearGradient id="thumbfill" x2="1" y2="1"><stop offset="0" stop-color="#ffdf6a"/><stop offset="1" stop-color="#f8b838"/></linearGradient></defs>';
E.thumb = defs + E.thumb;
const render = (id, names) => { document.getElementById(id).innerHTML = names.split(' ').map(svg).join(''); };
render('frequent', 'thumb grin kissheart hearts laugh winktongue sweat joy kisshappy scream');
render('people', 'grin smiley smile beam laugh sweat rofl joy slight upside wink blush angel love hearts star kissheart kiss relaxed kissclosed kisshappy yum tongue winktongue zany squeezetongue money hug cover shush think zip raised neutral blank mute');
```
